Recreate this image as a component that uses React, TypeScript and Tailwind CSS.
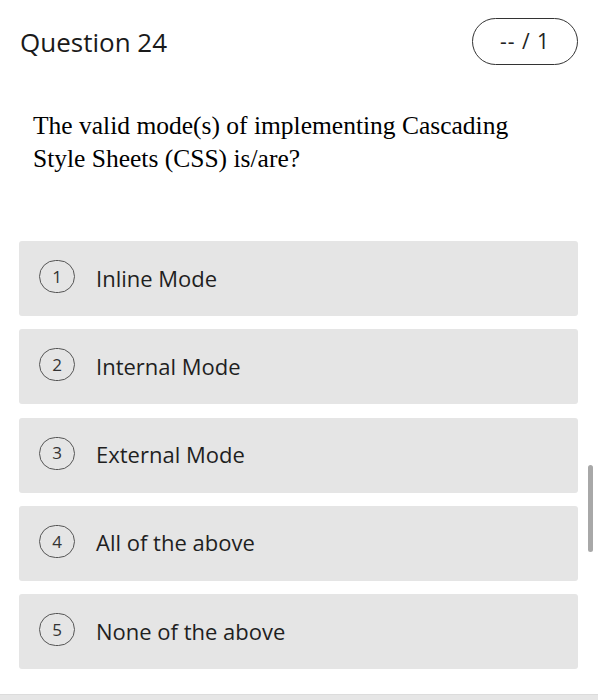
import React from "react";

const options = ["Inline Mode", "Internal Mode", "External Mode", "All of the above", "None of the above"];

export default function App() {
  return (
    <div className="relative w-[598px] h-[700px] bg-white overflow-hidden flex flex-col" style={{ fontFamily: '"Open Sans", sans-serif' }}>
      <div className="flex-1 px-[19px] pt-[18px]">
        <div className="flex items-center justify-between pr-px">
          <div className="text-[26px] font-medium text-[#1a1a1a] leading-none pl-px">Question 24</div>
          <div className="w-[106px] h-[47px] rounded-full border-[1.5px] border-[#333] flex items-center justify-center text-[21px] tracking-[1px] text-[#222]">
            -- / 1
          </div>
        </div>
        <div
          className="mt-[44px] pl-[14px] text-[25.5px] leading-[33px] text-black"
          style={{ fontFamily: '"Liberation Serif", serif' }}
        >
          The valid mode(s) of implementing Cascading
          <br />
          Style Sheets (CSS) is/are?
        </div>
        <div className="mt-[66px] flex flex-col gap-[13.25px]">
          {options.map((o, i) => (
            <div key={i} className="h-[75px] w-[559px] rounded-[3px] bg-[#e5e5e5] flex items-center pl-[20px]">
              <div className="w-[36px] h-[33px] rounded-full border-[1.5px] border-[#555] flex items-center justify-center text-[17px] text-[#333] -mt-[4px]">
                {i + 1}
              </div>
              <div className="ml-[21px] text-[22px] text-[#1f1f1f] -mt-[1px]">{o}</div>
            </div>
          ))}
        </div>
      </div>
      <div className="h-[6px] bg-[#e6e6e6] border-t border-[#dcdcdc]" />
      <div className="absolute right-[5px] top-[465px] w-[5px] h-[87px] rounded-full bg-[#a8a8a8]" />
    </div>
  );
}
